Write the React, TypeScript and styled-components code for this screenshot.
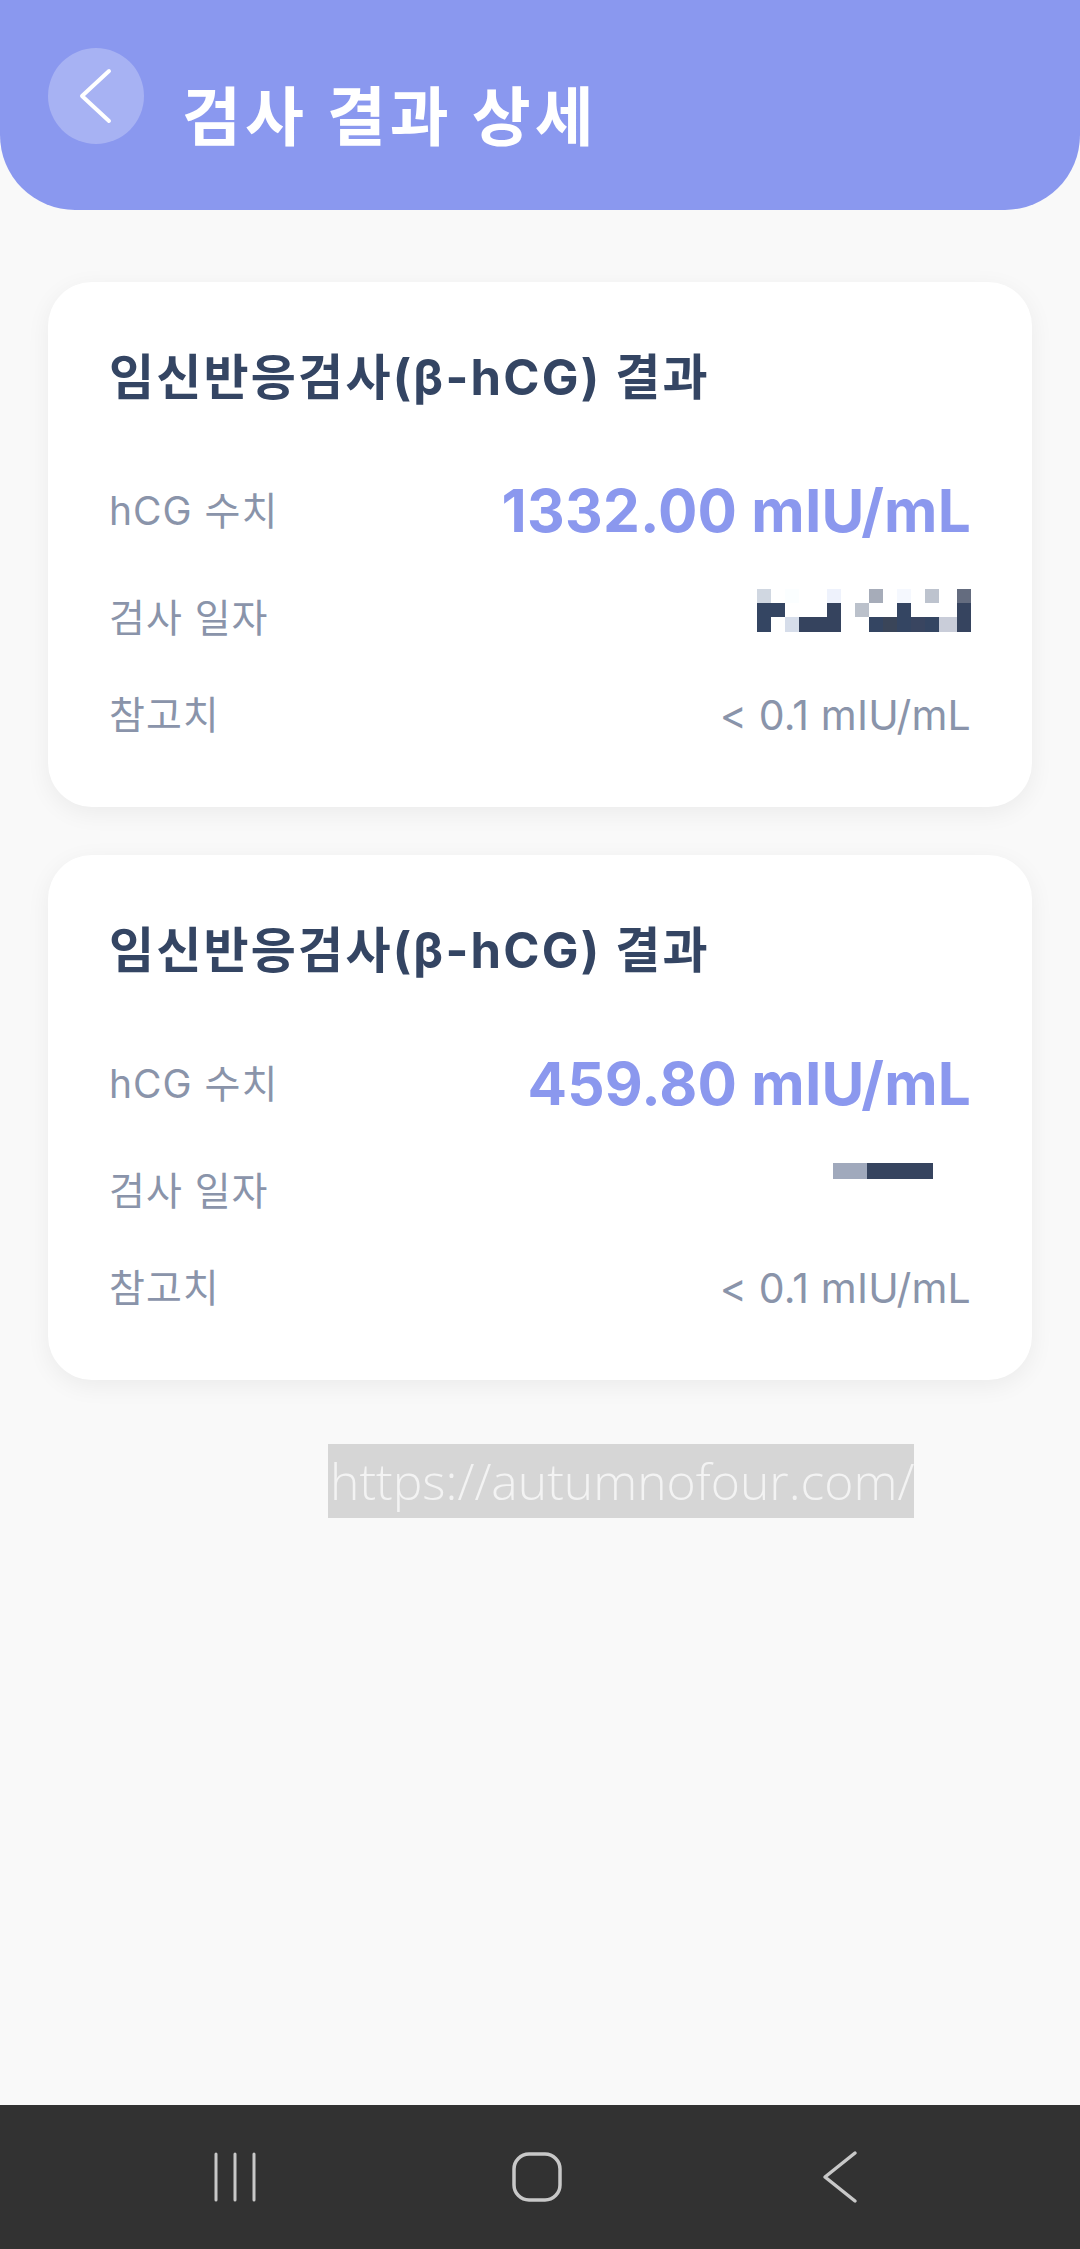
import React from "react";
import styled, { createGlobalStyle } from "styled-components";

const GlobalStyle = createGlobalStyle`
  html, body { margin: 0; padding: 0; background: #f9f9f9; }
  body { font-family: Inter, "Noto Sans CJK KR", sans-serif; }
  * { box-sizing: border-box; }
`;

const Page = styled.div`
  min-height: 2249px;
  display: flex;
  flex-direction: column;
  background: #f9f9f9;
`;

const Header = styled.header`
  height: 210px;
  background: #8a98ef;
  border-radius: 0 0 75px 75px;
  display: flex;
  align-items: flex-start;
  padding: 48px 0 0 48px;
  gap: 38px;
`;

const BackButton = styled.button`
  width: 96px;
  height: 96px;
  border-radius: 50%;
  border: none;
  padding: 0;
  background: rgba(255, 255, 255, 0.25);
  display: flex;
  align-items: center;
  justify-content: center;
`;

const HeaderTitle = styled.h1`
  margin: 29px 0 0;
  color: #ffffff;
  font-family: Inter, "Noto Sans CJK KR", sans-serif;
  font-weight: 700;
  font-size: 64px;
  line-height: 80px;
  letter-spacing: 4px;
`;

const Main = styled.main`
  flex: 1;
  display: flex;
  flex-direction: column;
  gap: 48px;
  padding: 72px 48px 0;
`;

const Card = styled.section`
  background: #ffffff;
  border-radius: 44px;
  box-shadow: 0 6px 24px rgba(0, 0, 0, 0.06);
  padding: 66px 61px 66px;
  display: flex;
  flex-direction: column;
`;

const CardTitle = styled.h2`
  margin: 0 0 67px;
  color: #344563;
  font-weight: 700;
  font-size: 49px;
  line-height: 60px;
  letter-spacing: 2.2px;
`;

const Rows = styled.div`
  display: flex;
  flex-direction: column;
  gap: 45px;
`;

const Row = styled.div<{ $tall?: boolean }>`
  display: flex;
  align-items: center;
  justify-content: space-between;
  height: ${(p) => (p.$tall ? "72px" : "52px")};
`;

const Label = styled.span`
  color: #8a94aa;
  font-size: 39px;
  line-height: 52px;
  font-weight: 400;
  letter-spacing: 1px;
`;

const BigValue = styled.span`
  color: #8b98ee;
  font-size: 58.5px;
  line-height: 72px;
  font-weight: 700;
  letter-spacing: 0.2px;
`;

const RefValue = styled.span`
  color: #8a94aa;
  font-size: 41px;
  line-height: 52px;
  font-weight: 400;
  letter-spacing: 0.2px;
`;

const Mosaic = styled.svg`
  display: block;
  width: 214px;
  height: 58px;
`;

const Watermark = styled.div`
  margin: 16px 0 0 280px;
  align-self: flex-start;
  background: #d6d6d6;
  color: #f3f3f3;
  font-family: "Open Sans", "Noto Sans", sans-serif;
  font-weight: 300;
  font-size: 49.8px;
  line-height: 74px;
  width: 586px;
  height: 74px;
  white-space: nowrap;
  overflow: hidden;
  padding-left: 2px;
`;

const NavBar = styled.nav`
  height: 144px;
  background: #323232;
  display: grid;
  grid-template-columns: repeat(3, 302px);
  justify-content: center;
  justify-items: center;
  align-items: center;
  padding-right: 6px;
`;

const NavIcon = styled.svg`
  display: block;
  width: 56px;
  height: 56px;
`;

type Cell = [number, number, number, number, string];

const mosaic1: Cell[] = [
  [0, 0, 14, 14, "#D0D7E1"],
  [28, 0, 14, 14, "#FBFEFF"],
  [70, 0, 14, 14, "#EEF2FC"],
  [112, 0, 14, 14, "#A6ACB9"],
  [140, 0, 14, 14, "#F5F8FE"],
  [168, 0, 14, 14, "#BDC3CE"],
  [200, 0, 14, 14, "#646C7F"],
  [0, 14, 28, 14, "#344562"],
  [70, 14, 14, 14, "#35435E"],
  [98, 14, 14, 14, "#BBC1CB"],
  [140, 14, 14, 14, "#344562"],
  [200, 14, 14, 14, "#36445F"],
  [0, 28, 14, 15, "#344562"],
  [28, 28, 14, 15, "#D6DDEA"],
  [42, 28, 42, 15, "#35435E"],
  [112, 28, 14, 15, "#344562"],
  [126, 28, 14, 15, "#3A4559"],
  [140, 28, 14, 15, "#344562"],
  [154, 28, 14, 15, "#394560"],
  [168, 28, 14, 15, "#344562"],
  [182, 28, 18, 15, "#C9CDD9"],
  [200, 28, 14, 15, "#36445F"],
];

const mosaic2: Cell[] = [
  [76, 1, 34, 16, "#A0A9BC"],
  [110, 1, 66, 16, "#36445F"],
];

const DateMosaic = ({ cells }: { cells: Cell[] }) => (
  <Mosaic viewBox="0 0 214 58" shapeRendering="crispEdges">
    {cells.map(([x, y, w, h, c], i) => (
      <rect key={i} x={x} y={y} width={w} height={h} fill={c} />
    ))}
  </Mosaic>
);

const results = [
  { value: "1332.00 mIU/mL", cells: mosaic1 },
  { value: "459.80 mIU/mL", cells: mosaic2 },
];

export default function App() {
  return (
    <>
      <GlobalStyle />
      <Page>
        <Header>
          <BackButton aria-label="뒤로">
            <svg width="96" height="96" viewBox="0 0 96 96">
              <polyline
                points="61,23 34,48 61,73"
                fill="none"
                stroke="#ffffff"
                strokeWidth="4"
                strokeLinecap="round"
                strokeLinejoin="round"
              />
            </svg>
          </BackButton>
          <HeaderTitle>검사 결과 상세</HeaderTitle>
        </Header>
        <Main>
          {results.map((r, i) => (
            <Card key={i}>
              <CardTitle>임신반응검사(β-hCG) 결과</CardTitle>
              <Rows>
                <Row $tall>
                  <Label>hCG 수치</Label>
                  <BigValue>{r.value}</BigValue>
                </Row>
                <Row>
                  <Label>검사 일자</Label>
                  <DateMosaic cells={r.cells} />
                </Row>
                <Row>
                  <Label>참고치</Label>
                  <RefValue>&lt; 0.1 mIU/mL</RefValue>
                </Row>
              </Rows>
            </Card>
          ))}
          <Watermark>https://autumnofour.com/</Watermark>
        </Main>
        <NavBar>
          <NavIcon viewBox="0 0 56 56">
            <g stroke="#c8c8c8" strokeWidth="3" strokeLinecap="round">
              <line x1="9" y1="5" x2="9" y2="51" />
              <line x1="28" y1="5" x2="28" y2="51" />
              <line x1="47" y1="5" x2="47" y2="51" />
            </g>
          </NavIcon>
          <NavIcon viewBox="0 0 56 56">
            <rect x="5" y="5" width="46" height="46" rx="15" fill="none" stroke="#c8c8c8" strokeWidth="3.5" />
          </NavIcon>
          <NavIcon viewBox="0 0 56 56">
            <polyline points="44,4 14,28 44,52" fill="none" stroke="#c8c8c8" strokeWidth="3.5" strokeLinecap="round" strokeLinejoin="round" />
          </NavIcon>
        </NavBar>
      </Page>
    </>
  );
}
